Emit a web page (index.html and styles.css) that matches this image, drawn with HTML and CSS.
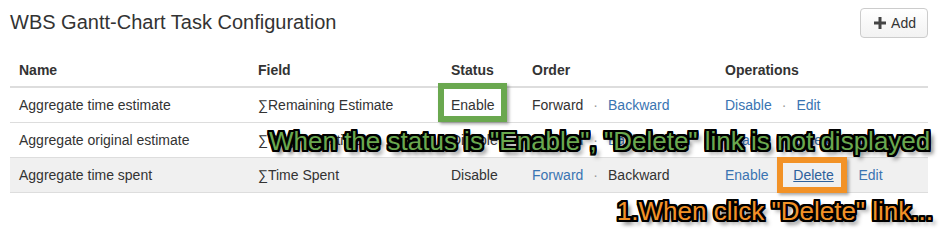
FILE: index.html
```html
<!DOCTYPE html>
<html>
<head>
<meta charset="utf-8">
<title>WBS Gantt-Chart Task Configuration</title>
<link rel="stylesheet" href="styles.css">
</head>
<body>
<div class="page">
  <div class="page-header">
    <h2 class="title">WBS Gantt-Chart Task Configuration</h2>
    <button class="btn"><svg class="icon-plus" width="12" height="12" viewBox="0 0 12 12"><rect x="4.5" y="0" width="3" height="12"/><rect x="0" y="4.5" width="12" height="3"/></svg><span>Add</span></button>
  </div>
  <table class="tasks">
    <colgroup>
      <col class="c-name"><col class="c-field"><col class="c-status"><col class="c-order"><col class="c-ops">
    </colgroup>
    <thead>
      <tr><th>Name</th><th>Field</th><th>Status</th><th>Order</th><th>Operations</th></tr>
    </thead>
    <tbody>
      <tr>
        <td>Aggregate time estimate</td>
        <td>∑Remaining Estimate</td>
        <td>Enable</td>
        <td><span>Forward</span><span class="sep">·</span><a href="#">Backward</a></td>
        <td><a href="#">Disable</a><span class="sep">·</span><a href="#">Edit</a></td>
      </tr>
      <tr>
        <td>Aggregate original estimate</td>
        <td>∑Original Estimate</td>
        <td>Disable</td>
        <td><a href="#">Forward</a><span class="sep">·</span><a href="#">Backward</a></td>
        <td><a href="#">Enable</a><span class="sep">·</span><a href="#">Delete</a><span class="sep">·</span><a href="#">Edit</a></td>
      </tr>
      <tr class="hover">
        <td>Aggregate time spent</td>
        <td>∑Time Spent</td>
        <td>Disable</td>
        <td><a href="#">Forward</a><span class="sep">·</span><span>Backward</span></td>
        <td><a href="#">Enable</a><span class="sep">·</span><a href="#" class="hovered">Delete</a><span class="sep">·</span><a href="#">Edit</a></td>
      </tr>
    </tbody>
  </table>
  <div class="note-row">
    <div class="note note-orange">1.When click "Delete" link...</div>
  </div>
  <div class="mark mark-green"></div>
  <div class="mark mark-orange"></div>
  <div class="note note-green">When the status is "Enable", "Delete" link is not displayed</div>
</div>
</body>
</html>
```
FILE: styles.css
```css
html, body {
  margin: 0;
  padding: 0;
  background: #fff;
}
body {
  font-family: "Liberation Sans", Arial, sans-serif;
  font-size: 14px;
  line-height: 20px;
  color: #333;
}
.page {
  position: relative;
  width: 918px;
  margin-left: 10px;
  padding-top: 8px;
  padding-bottom: 8px;
}
.page-header {
  display: flex;
  justify-content: space-between;
  align-items: flex-start;
  height: 30px;
}
.title {
  margin: 0;
  font-size: 20px;
  font-weight: normal;
  line-height: 28px;
  color: #333;
}
.btn {
  display: flex;
  align-items: center;
  gap: 5px;
  height: 30px;
  box-sizing: border-box;
  padding: 0 11px 0 13px;
  border: 1px solid #ccc;
  border-radius: 4px;
  background: linear-gradient(#fff, #f2f2f2);
  font-family: "Liberation Sans", Arial, sans-serif;
  font-size: 14px;
  color: #333;
}
.icon-plus {
  fill: #444;
  display: block;
}
.tasks {
  margin-top: 16px;
  width: 918px;
  table-layout: fixed;
  border-collapse: separate;
  border-spacing: 0;
}
.c-name { width: 239px; }
.c-field { width: 193px; }
.c-status { width: 81px; }
.c-order { width: 193px; }
.c-ops { width: 212px; }
.tasks th {
  text-align: left;
  font-weight: bold;
  padding: 6px 9px;
  border-bottom: 2px solid #ddd;
  white-space: nowrap;
}
.tasks td {
  padding: 7px 9px;
  border-bottom: 1px solid #ddd;
  white-space: nowrap;
}
.tasks tr.hover td {
  background: #f0f0f0;
}
.tasks a {
  color: #3a74b2;
  text-decoration: none;
}
.tasks a.hovered {
  color: #2d619c;
  text-decoration: underline;
}
.sep {
  padding: 0 10px;
  color: #999;
}
.mark {
  position: absolute;
  box-sizing: border-box;
  border-width: 6px;
  border-style: solid;
  box-shadow: 2px 2px 3px rgba(0, 0, 0, 0.35);
}
.mark-green {
  left: 428px;
  top: 83px;
  width: 69px;
  height: 39px;
  border-color: #6aa84f;
}
.mark-orange {
  left: 767px;
  top: 157px;
  width: 70px;
  height: 36px;
  border-color: #f29227;
}
.note-row {
  display: flex;
  justify-content: flex-end;
  margin-top: 5px;
  margin-right: -5px;
}
.note {
  font-family: "Liberation Sans", Arial, sans-serif;
  font-size: 26px;
  line-height: 26px;
  white-space: nowrap;
  text-shadow:
    -2px -2px 0 #000, -1px -2px 0 #000, 0 -2px 0 #000, 1px -2px 0 #000, 2px -2px 0 #000,
    2px -1px 0 #000, 2px 0 0 #000, 2px 1px 0 #000, 2px 2px 0 #000,
    1px 2px 0 #000, 0 2px 0 #000, -1px 2px 0 #000, -2px 2px 0 #000,
    -2px 1px 0 #000, -2px 0 0 #000, -2px -1px 0 #000,
    4px 4px 4px rgba(0, 0, 0, 0.7);
}
.note-green {
  position: absolute;
  left: 259px;
  top: 128px;
  color: #6aa84f;
}
.note-orange {
  color: #f29227;
}
```
